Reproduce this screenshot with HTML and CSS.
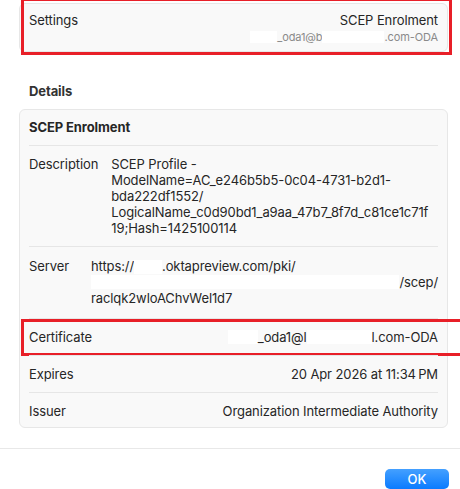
FILE: index.html
```html
<!DOCTYPE html>
<html lang="en">
<head>
<meta charset="utf-8">
<title>SCEP Enrolment</title>
<link rel="stylesheet" href="styles.css">
</head>
<body>
<div class="window">
  <div class="content">
    <section class="summary">
      <span class="summary-label">Settings</span>
      <div class="summary-value">
        <div class="summary-title">SCEP Enrolment</div>
        <div class="summary-sub"><span class="redact redact-s1"></span>_oda1@b<span class="redact redact-s2"></span>.com-ODA</div>
      </div>
      <div class="highlight highlight-summary"></div>
    </section>

    <h2 class="section-title">Details</h2>

    <section class="card">
      <header class="card-head">SCEP Enrolment</header>

      <div class="row row-stack">
        <span class="row-label">Description</span>
        <span class="row-text">SCEP Profile -<br>ModelName=AC_e246b5b5-0c04-4731-b2d1-<br>bda222df1552/<br>LogicalName_c0d90bd1_a9aa_47b7_8f7d_c81ce1c71f<br>19;Hash=1425100114</span>
      </div>

      <div class="row row-stack row-server">
        <span class="row-label">Server</span>
        <div class="row-text">
          <div class="url-line">https://<span class="redact redact-u1"></span>.oktapreview.com/pki/</div>
          <div class="url-line url-fill"><span class="redact redact-fill"></span>/scep/</div>
          <div class="url-line">raclqk2wloAChvWel1d7</div>
        </div>
      </div>

      <div class="row row-split">
        <span class="row-label">Certificate</span>
        <span class="row-value"><span class="redact redact-c1"></span>_oda1@l<span class="redact redact-c2"></span>l.com-ODA</span>
        <div class="highlight highlight-row"></div>
      </div>

      <div class="row row-split">
        <span class="row-label">Expires</span>
        <span class="row-value">20 Apr 2026 at 11:34&#8239;PM</span>
      </div>

      <div class="row row-split row-last">
        <span class="row-label">Issuer</span>
        <span class="row-value">Organization Intermediate Authority</span>
      </div>
    </section>
  </div>

  <footer class="footer">
    <button class="btn-ok" type="button">OK</button>
  </footer>
</div>
</body>
</html>
```

FILE: styles.css
```css
html, body {
  margin: 0;
  overflow: hidden;
  background: #ffffff;
}

body {
  width: 460px;
  height: 489px;
  font-family: Inter, "Noto Sans", sans-serif;
  font-size: 13px;
  letter-spacing: -0.1px;
  color: #262626;
}

.content {
  padding: 3px 12px 0 19px;
}

/* summary card at the top */
.summary {
  position: relative;
  display: flex;
  justify-content: space-between;
  background: #f9f9f9;
  border: 1px solid #e7e7e7;
  border-radius: 6px;
  padding: 8px 9px 7px;
  line-height: 16px;
}

.summary-value {
  text-align: right;
}

.summary-sub {
  margin-top: 2px;
  display: flex;
  justify-content: flex-end;
  align-items: center;
  font-size: 11px;
  line-height: 14px;
  color: #8a8a8a;
}

/* blanked-out parts of identifiers */
.redact {
  display: inline-block;
  height: 14px;
  background: #ffffff;
  vertical-align: middle;
}

.redact-s1 { width: 27px; height: 12px; }
.redact-s2 { width: 62px; height: 12px; }
.redact-u1 { width: 28px; }
.redact-fill { flex: 1; }
.redact-c1 { width: 30px; }
.redact-c2 { width: 65px; }

/* red annotation frames */
.highlight {
  position: absolute;
  border: 3px solid #e81f28;
  pointer-events: none;
}

.highlight-summary {
  left: 1px;
  right: -5px;
  top: -6px;
  bottom: -4px;
}

.highlight-row {
  left: -8px;
  right: -40px;
  top: 0;
  bottom: -1px;
}

.section-title {
  margin: 31px 0 10px;
  padding-left: 10px;
  font-size: 13px;
  line-height: 16px;
  font-weight: 700;
  color: #333333;
}

/* details card */
.card {
  background: #f9f9f9;
  border: 1px solid #e7e7e7;
  border-radius: 6px;
  padding: 0 9px;
}

.card-head {
  padding: 9px 0 10px;
  font-weight: 700;
  line-height: 16px;
}

.row {
  position: relative;
  display: flex;
  border-top: 1px solid #e6e6e6;
  padding: 10px 0;
  line-height: 16px;
}

.row-server {
  padding: 11px 0 12px;
}

.row-last {
  padding-bottom: 8px;
}

.row-stack .row-label {
  min-width: 49px;
  margin-right: 13px;
  flex: none;
}

.row-stack .row-text {
  flex: 1;
}

.url-fill {
  display: flex;
  align-items: center;
}

.row-split {
  justify-content: space-between;
}

.row-value {
  display: flex;
  align-items: center;
}

/* bottom button bar */
.footer {
  margin-top: 20px;
  border-top: 1px solid #e8e8e8;
  padding: 20px 11px 0 0;
  display: flex;
  justify-content: flex-end;
}

.btn-ok {
  width: 64px;
  height: 20px;
  border: 0;
  border-radius: 5px;
  background: linear-gradient(#44a0ff, #0a7bff);
  color: #ffffff;
  font-family: Inter, "Noto Sans", sans-serif;
  font-size: 13px;
  font-weight: 500;
  line-height: 20px;
  padding: 0;
}
```
